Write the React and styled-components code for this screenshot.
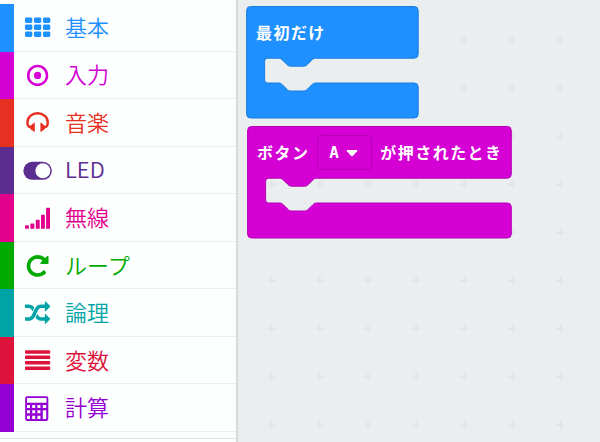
import React from 'react';
import styled, { createGlobalStyle } from 'styled-components';

const GlobalStyle = createGlobalStyle`
  * { box-sizing: border-box; }
  body { margin: 0; overflow: hidden; font-family: 'Noto Sans CJK JP', 'Noto Sans', sans-serif; }
`;

const Editor = styled.div`
  display: flex;
  width: 600px;
  height: 442px;
  overflow: hidden;
  background: #eaeeef;
`;

const Toolbox = styled.nav`
  width: 238px;
  flex: none;
  padding-top: 4px;
  background: #fdfefe;
  border-right: 2px solid #d5dbdd;
`;

const CategoryList = styled.ul`
  margin: 0;
  padding: 0;
  list-style: none;
`;

const Category = styled.li`
  display: flex;
  align-items: center;
  height: 47.55px;
  color: ${(p) => p.$color};
  border-left: 14px solid ${(p) => p.$color};
`;

const CategoryBody = styled.div`
  display: flex;
  align-items: center;
  flex: 1;
  height: 100%;
  padding-left: 9px;
  border-bottom: 1px solid #ebeff1;
`;

const Icon = styled.svg`
  width: 30px;
  height: 30px;
  flex: none;
  fill: currentColor;
`;

const CategoryName = styled.span`
  margin-left: 12px;
  padding-bottom: 3px;
  font-size: 22px;
  font-weight: 350;
  line-height: 30px;
  white-space: nowrap;
`;

const Divider = styled.div`
  height: 1px;
  margin-top: 6px;
  background: #e3e6e8;
`;

const Workspace = styled.main`
  position: relative;
  flex: 1;
  overflow: hidden;
`;

const Grid = styled.svg`
  display: block;
  width: 362px;
  height: 442px;
`;

const Block = styled.section`
  position: absolute;
  left: ${(p) => p.$x}px;
  top: ${(p) => p.$y}px;
  width: ${(p) => p.$width}px;
  height: 112px;
`;

const BlockShape = styled.svg`
  position: absolute;
  inset: 0;
  width: 100%;
  height: 100%;
  overflow: visible;
`;

const BlockHeader = styled.div`
  position: relative;
  display: flex;
  align-items: center;
  height: 52px;
  padding-left: 10px;
  color: #fff;
`;

const BlockText = styled.span`
  padding-bottom: 1px;
  font-size: 16px;
  font-weight: 700;
  line-height: 24px;
  letter-spacing: 1.45px;
  white-space: nowrap;
`;

const Dropdown = styled.div`
  display: flex;
  align-items: center;
  width: 55px;
  height: 35px;
  margin: 1px 8px 0 8px;
  padding-left: 11px;
  gap: 7px;
  border: 1px solid #b400b4;
  border-radius: 4px;
  font: 700 16px 'DejaVu Sans Mono', monospace;
`;

const Arrow = styled.svg`
  width: 12px;
  height: 8px;
  fill: #fff;
`;

const icons = {
  grid: [2, 11, 20].map((x) =>
    [5.5, 12.5, 19.5].map((y) => <rect key={`${x}-${y}`} x={x} y={y} width="7.3" height="5.4" rx="1.4" />)
  ),
  target: (
    <>
      <circle cx="14.6" cy="15.4" r="9.4" fill="none" stroke="currentColor" strokeWidth="2.5" />
      <circle cx="14.6" cy="15.4" r="3.6" />
    </>
  ),
  headphones: (
    <>
      <path
        d="M5.500 19.500C4.700 18 4.400 16.600 4.400 15.400A10.200 9.200 0 0 1 24.800 15.400C24.800 16.600 24.500 18 23.700 19.500"
        fill="none"
        stroke="currentColor"
        strokeWidth="2.4"
      />
      <path d="M4.600 18.700L8 18.400Q9 16.800 10.400 16.400V15.700H11.800V24.800H10.400V24Q8 23.600 7 21.300L5.200 20.700z" />
      <path d="M24.600 18.700L21.200 18.400Q20.200 16.800 18.800 16.400V15.700H17.400V24.800H18.800V24Q21.200 23.600 22.200 21.300L24 20.700z" />
    </>
  ),
  toggle: (
    <>
      <rect x="0.3" y="6.8" width="28.6" height="18" rx="9" />
      <circle cx="19.9" cy="15.8" r="7.5" fill="#fdfefe" />
    </>
  ),
  signal: [[2, 3.5], [7.4, 5.3], [12.8, 9], [18, 14], [23.1, 21]].map(([x, h]) => (
    <rect key={x} x={x} y={26.8 - h} width="3.9" height={h} rx="0.6" />
  )),
  repeat: (
    <path
      transform="translate(1.9 3.2) scale(.0142)"
      d="M1664 256v448q0 26-19 45t-45 19h-448q-42 0-59-40-17-39 14-69l138-138q-148-137-349-137-104 0-198.500 40.500t-163.500 109.500-109.500 163.500-40.500 198.500 40.500 198.500 109.500 163.500 163.500 109.500 198.500 40.500q119 0 225-52t179-147q7-10 23-12 15 0 25 9l137 138q9 8 9.500 20.500t-7.500 22.500q-109 132-264 204.500t-327 72.500q-156 0-298-61t-245-164-164-245-61-298 61-298 164-245 245-164 298-61q147 0 284.500 55.500t244.500 156.500l130-129q29-31 70-14 39 17 39 59z"
    />
  ),
  shuffle: (
    <path
      transform="translate(2 2.9) scale(.0141)"
      d="M666 481q-60 92-137 273-22-45-37-72.500t-40.500-63.500-51-56.500-63-35-81.500-14.500h-224q-14 0-23-9t-9-23v-192q0-14 9-23t23-9h224q250 0 410 225zm1126 799q0 14-9 23l-320 320q-9 9-23 9-13 0-22.500-9.500t-9.500-22.500v-192q-32 0-85 .5t-81 1-73-1-71-5-64-10.500-63-18.500-58-28.500-59-40-55-53.500-56-69.500q59-93 136-273 22 45 37 72.500t40.500 63.500 51 56.500 63 35 81.500 14.500h256v-192q0-14 9-23t23-9q12 0 24 10l319 319q9 9 9 23zm0-896q0 14-9 23l-320 320q-9 9-23 9-13 0-22.500-9.500t-9.500-22.500v-192h-256q-48 0-87 15t-69 45-51 61.500-45 77.500q-32 62-78 171-29 66-49.500 111t-54 105-64 100-74 83-90 68.500-106.500 42-128 16.500h-224q-14 0-23-9t-9-23v-192q0-14 9-23t23-9h224q48 0 87-15t69-45 51-61.500 45-77.500q32-62 78-171 29-66 49.500-111t54-105 64-100 74-83 90-68.500 106.500-42 128-16.500h256v-192q0-14 9-23t23-9q12 0 24 10l319 319q9 9 9 23z"
    />
  ),
  list: [5.2, 10.6, 16, 21.4].map((y) => <rect key={y} x="2" y={y} width="25.2" height="3.5" rx="0.9" />),
  calculator: (
    <path
      fillRule="evenodd"
      d="M4 3.3h19.5q1.800 0 1.800 1.800v21q0 1.800-1.800 1.800H4q-1.800 0-1.800-1.800v-21q0-1.800 1.800-1.800zM4 4.900h19.500v4.800H4zM4 12h3v3H4zM9.200 12h3v3h-3zM14.400 12h3v3h-3zM19.800 12h3.400v3h-3.400zM4 17.300h3v3H4zM9.200 17.300h3v3h-3zM14.400 17.300h3v3h-3zM4 22.700h3v3.300H4zM9.200 22.700h3v3.300h-3zM14.400 22.700h3v3.300h-3zM19.800 17.300h3.400v8.700h-3.400z"
    />
  ),
};

const categories = [
  { name: '基本', color: '#1e90ff', icon: 'grid' },
  { name: '入力', color: '#d400d4', icon: 'target' },
  { name: '音楽', color: '#e63022', icon: 'headphones' },
  { name: 'LED', color: '#5c2d91', icon: 'toggle' },
  { name: '無線', color: '#e3008c', icon: 'signal' },
  { name: 'ループ', color: '#00aa00', icon: 'repeat' },
  { name: '論理', color: '#00a4a6', icon: 'shuffle' },
  { name: '変数', color: '#dc143c', icon: 'list' },
  { name: '計算', color: '#9400d3', icon: 'calculator' },
];

function EventBlock({ x, y, width, fill, stroke, children }) {
  const r = width;
  const path =
    `M4 0H${r - 4}q4 0 4 4V47.700q0 4-4 4H69c-2 0-3 1-4 2l-4 4c-1 1-2 2-4 2H44c-2 0-3-1-4-2l-4-4c-1-1-2-2-4-2H21` +
    `q-3 0-3 3V73.500q0 3 3 3H32c2 0 3 1 4 2l4 4c1 1 2 2 4 2H57c2 0 3-1 4-2l4-4c1-1 2-2 4-2H${r - 4}` +
    `q4 0 4 4V107.500q0 4-4 4H4q-4 0-4-4V4q0-4 4-4z`;
  return (
    <Block $x={x} $y={y} $width={width}>
      <BlockShape>
        <path transform="translate(.6 .5)" d={path} fill={fill} stroke={stroke} />
      </BlockShape>
      <BlockHeader>{children}</BlockHeader>
    </Block>
  );
}

export default function App() {
  return (
    <>
      <GlobalStyle />
      <Editor>
        <Toolbox>
          <CategoryList>
            {categories.map((c) => (
              <Category key={c.name} $color={c.color}>
                <CategoryBody>
                  <Icon viewBox="0 0 30 30">{icons[c.icon]}</Icon>
                  <CategoryName>{c.name}</CategoryName>
                </CategoryBody>
              </Category>
            ))}
          </CategoryList>
          <Divider />
        </Toolbox>
        <Workspace>
          <Grid>
            <defs>
              <pattern id="crosses" x="9.8" y="16" width="48.1" height="48.1" patternUnits="userSpaceOnUse">
                <path d="M20 24h8M24 20v8" stroke="#dce0e2" strokeWidth="1.2" />
              </pattern>
            </defs>
            <rect width="100%" height="100%" fill="url(#crosses)" />
          </Grid>
          <EventBlock x={8} y={6} width={171.6} fill="#1e90ff" stroke="#1a7fe0">
            <BlockText>最初だけ</BlockText>
          </EventBlock>
          <EventBlock x={9} y={126} width={263.7} fill="#d400d4" stroke="#b400b4">
            <BlockText>ボタン</BlockText>
            <Dropdown>
              A
              <Arrow viewBox="0 0 12 8">
                <path d="M1.500 1h9q1.500 0 .6 1.200L7 6.800q-1 1-2 0L.9 2.200Q0 1 1.500 1z" />
              </Arrow>
            </Dropdown>
            <BlockText>が押されたとき</BlockText>
          </EventBlock>
        </Workspace>
      </Editor>
    </>
  );
}
